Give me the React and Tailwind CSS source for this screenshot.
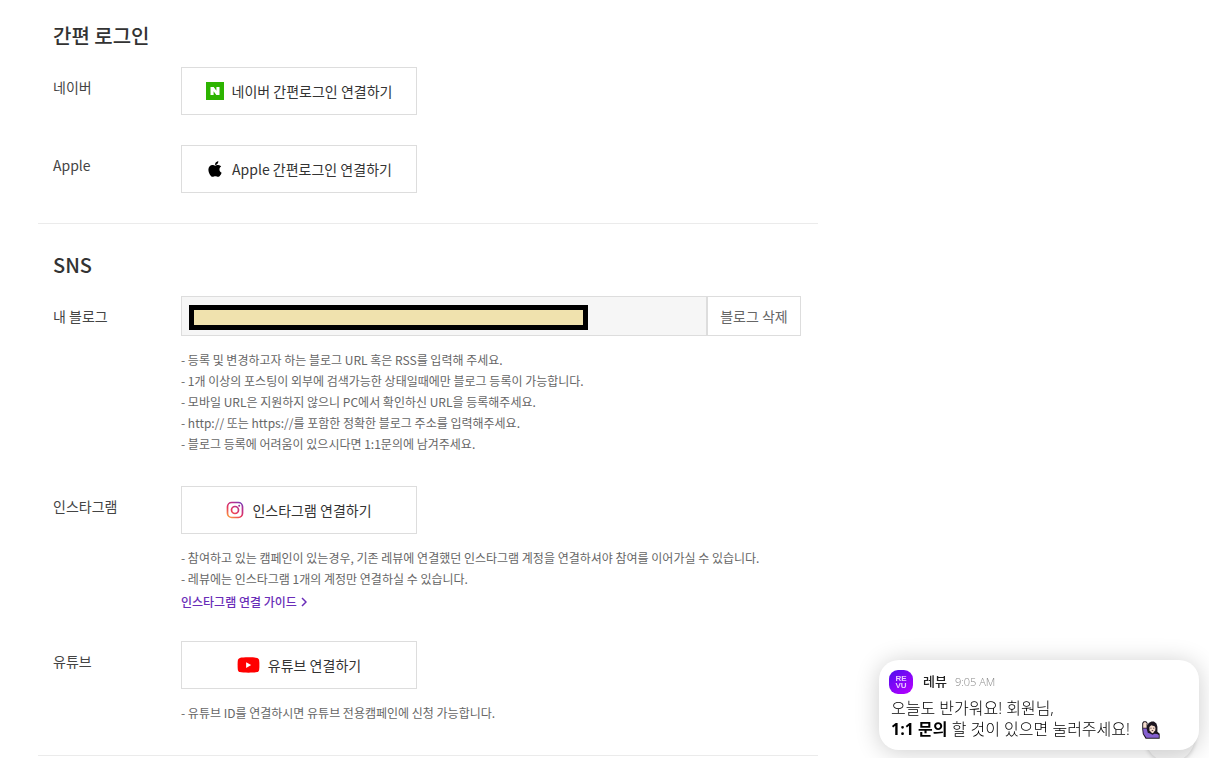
import React from 'react';
import { FaApple } from 'react-icons/fa';

const NaverIcon = () => (
  <svg width="18" height="18" viewBox="0 0 18 18" aria-hidden="true">
    <rect width="18" height="18" fill="#2db400" />
    <path d="M4.500 5h3.200l2.700 3.700V5h3.100v8h-3.200L7.600 9.300V13H4.500z" fill="#fff" />
  </svg>
);

const InstagramIcon = () => (
  <svg width="18" height="18" viewBox="0 0 18 18" fill="none" aria-hidden="true">
    <defs>
      <linearGradient id="insta" x1="3" y1="17" x2="14" y2="1" gradientUnits="userSpaceOnUse">
        <stop offset="0" stopColor="#fba040" />
        <stop offset="0.4" stopColor="#e8395b" />
        <stop offset="0.8" stopColor="#b32d92" />
        <stop offset="1" stopColor="#7a3fb5" />
      </linearGradient>
    </defs>
    <rect x="1.500" y="1.500" width="15" height="15" rx="4.200" stroke="url(#insta)" strokeWidth="1.700" />
    <circle cx="9" cy="9" r="3.500" stroke="url(#insta)" strokeWidth="1.700" />
    <circle cx="13.200" cy="4.800" r="1" fill="#a02d92" />
  </svg>
);

const YoutubeIcon = () => (
  <svg width="23" height="16" viewBox="0 0 24 16" aria-hidden="true">
    <path
      d="M12 0c4 0 7.500.2 9 .6 1 .3 1.700 1 2 2 .5 2.500.5 8.300 0 10.800-.3 1-1 1.700-2 2-3 .8-15 .8-18 0-1-.3-1.700-1-2-2-.5-2.500-.5-8.300 0-10.800.3-1 1-1.700 2-2C4.500.2 8 0 12 0z"
      fill="#f00"
    />
    <path d="M9.500 5v6L14.800 8z" fill="#fff" />
  </svg>
);

const RevuLogo = () => (
  <svg width="24" height="24" viewBox="0 0 24 24" role="img" aria-label="REVU">
    <defs>
      <linearGradient id="revu" x1="4" y1="2" x2="20" y2="24" gradientUnits="userSpaceOnUse">
        <stop offset="0" stopColor="#5a0cf0" />
        <stop offset="1" stopColor="#b400ff" />
      </linearGradient>
    </defs>
    <rect width="24" height="24" rx="9" fill="url(#revu)" />
    <g fill="#e9c9ff" fontFamily="Liberation Sans, sans-serif" fontSize="8" fontWeight="700" textAnchor="middle">
      <text x="12" y="11">RE</text>
      <text x="12" y="18">VU</text>
    </g>
  </svg>
);

const HandRaiseIcon = () => (
  <svg width="18" height="18" viewBox="0 0 18 18" aria-hidden="true">
    <path
      d="M.2 8V2L1.600.3h2.600L5.600 2v2.500L6.600 2 9.500.6h2.400l2.500 1.800 1 3.400v5l2.300 2v4.900H3.600L.8 13z"
      fill="#1d1620"
    />
    <path d="M1.100 7.600h3.500l1.200 4.200 2.700.9 2 1 2-1 2.700.3 1.600 1v2.700H4.400l-2.700-4z" fill="#8560cf" />
    <path d="M1.200 6.800V2.400l.9-1.200h1.600l.9 1.100v4.500z" fill="#f7dece" />
    <path d="M7.400 6l1.800-1.800 3.400 1 .9 1.800-.3 2.300-1.500 1.900-1.200 1-1.300-1L7.500 9.400z" fill="#f7dece" />
    <path d="M8.400 7.200h1.100M11.200 7.200h1.100M9.700 9.600h1.500" stroke="#3b2530" strokeWidth="0.900" />
  </svg>
);

const Section = ({ title, children }) => (
  <section className="border-b border-[#ebebeb] px-[15px] pt-[26px] pb-[30px]">
    <h2 className="mb-4 text-xl leading-[30px] font-medium text-[#333]">{title}</h2>
    <div className="flex flex-col gap-[30px]">{children}</div>
  </section>
);

const Row = ({ label, htmlFor, children }) => (
  <div className="flex">
    <div className="w-32 shrink-0 pt-[10px] text-sm text-[#444]">
      {htmlFor ? <label htmlFor={htmlFor}>{label}</label> : label}
    </div>
    <div className="min-w-0 flex-1">{children}</div>
  </div>
);

const ConnectButton = ({ icon, children }) => (
  <button
    type="button"
    className="flex h-12 w-full max-w-[236px] items-center justify-center gap-2 border border-[#ddd] bg-white text-sm text-[#333]"
  >
    {icon}
    <span>{children}</span>
  </button>
);

const Notes = ({ items }) => (
  <ul className="mt-[13px] pb-[2px] text-xs leading-[21px] text-[#666]">
    {items.map((item) => (
      <li key={item}>- {item}</li>
    ))}
  </ul>
);

const blogNotes = [
  '등록 및 변경하고자 하는 블로그 URL 혹은 RSS를 입력해 주세요.',
  '1개 이상의 포스팅이 외부에 검색가능한 상태일때에만 블로그 등록이 가능합니다.',
  '모바일 URL은 지원하지 않으니 PC에서 확인하신 URL을 등록해주세요.',
  'http:// 또는 https://를 포함한 정확한 블로그 주소를 입력해주세요.',
  '블로그 등록에 어려움이 있으시다면 1:1문의에 남겨주세요.',
];

const instagramNotes = [
  '참여하고 있는 캠페인이 있는경우, 기존 레뷰에 연결했던 인스타그램 계정을 연결하셔야 참여를 이어가실 수 있습니다.',
  '레뷰에는 인스타그램 1개의 계정만 연결하실 수 있습니다.',
];

const ChatPopup = () => (
  <div className="font-['Open_Sans','Noto_Sans_CJK_KR',sans-serif]">
    <button
      type="button"
      aria-label="채팅 열기"
      className="fixed right-[14px] -bottom-1 size-[50px] rounded-full bg-[#f5f5f5] shadow-[0_1px_4px_rgba(0,0,0,0.2)]"
    />
    <aside className="fixed right-[10px] bottom-2 w-80 rounded-[20px] bg-white p-[10px] shadow-[0_2px_24px_rgba(0,0,0,0.2)]">
      <div className="flex h-6 items-center">
        <RevuLogo />
        <strong className="ml-[10px] text-[13px] font-medium text-[#222]">레뷰</strong>
        <time className="ml-2 text-[11px] font-light text-[#888]">9:05 AM</time>
      </div>
      <p className="mt-1 pl-[2px] text-base leading-[21px] font-light text-black">
        오늘도 반가워요! 회원님,
        <br />
        <span className="flex items-center">
          <span>
            <b className="font-bold">1:1 문의</b> 할 것이 있으면 눌러주세요!
          </span>
          <span className="ml-3">
            <HandRaiseIcon />
          </span>
        </span>
      </p>
    </aside>
  </div>
);

export default function App() {
  return (
    <div className="min-h-screen bg-white font-['Noto_Sans_CJK_KR',sans-serif]">
      <main className="ml-[38px] max-w-[780px] -mt-[5px]">
        <Section title="간편 로그인">
          <Row label="네이버">
            <ConnectButton icon={<NaverIcon />}>네이버 간편로그인 연결하기</ConnectButton>
          </Row>
          <Row label="Apple">
            <ConnectButton icon={<FaApple className="size-[18px] text-black" />}>
              Apple 간편로그인 연결하기
            </ConnectButton>
          </Row>
        </Section>

        <Section title="SNS">
          <Row label="내 블로그" htmlFor="blog">
            <div className="flex h-10 max-w-[620px]">
              <div className="relative min-w-0 flex-1">
                <input
                  id="blog"
                  type="text"
                  readOnly
                  className="h-full w-full border border-[#ddd] bg-[#f6f6f6] px-2 text-sm"
                />
                <div className="absolute top-[9px] left-2 h-[25px] w-[399px] border-[5px] border-black bg-[#f0e2ae]" />
              </div>
              <button type="button" className="w-[94px] border border-[#ddd] bg-white text-sm text-[#666]">
                블로그 삭제
              </button>
            </div>
            <Notes items={blogNotes} />
          </Row>
          <Row label="인스타그램">
            <ConnectButton icon={<InstagramIcon />}>인스타그램 연결하기</ConnectButton>
            <Notes items={instagramNotes} />
            <a href="#guide" className="flex h-5 items-center gap-1 pt-[2px] text-xs font-medium text-[#6a2db8]">
              인스타그램 연결 가이드
              <svg width="6" height="10" viewBox="0 0 6 10" fill="none" aria-hidden="true">
                <path d="M1 1l4 4-4 4" stroke="currentColor" strokeWidth="1.500" />
              </svg>
            </a>
          </Row>
          <Row label="유튜브">
            <ConnectButton icon={<YoutubeIcon />}>유튜브 연결하기</ConnectButton>
            <Notes items={['유튜브 ID를 연결하시면 유튜브 전용캠페인에 신청 가능합니다.']} />
          </Row>
        </Section>
      </main>
      <ChatPopup />
    </div>
  );
}
